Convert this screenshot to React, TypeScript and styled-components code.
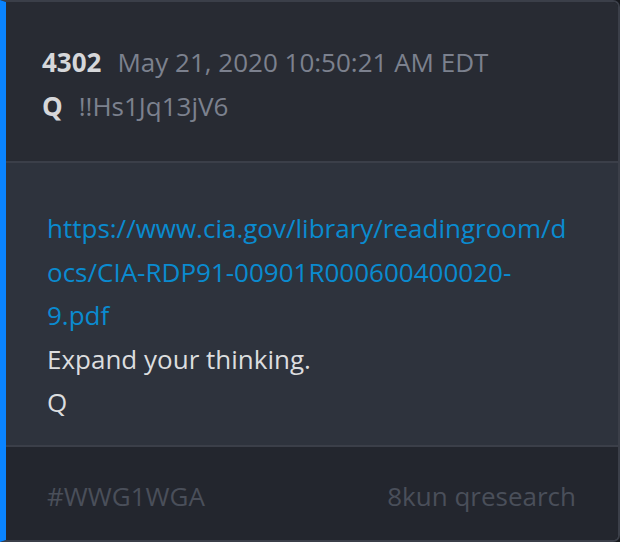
import React from "react";
import styled, { createGlobalStyle } from "styled-components";

const GlobalStyle = createGlobalStyle`
  html, body {
    margin: 0;
    padding: 0;
    background: #16181d;
  }
  * {
    box-sizing: border-box;
  }
`;

const Card = styled.article`
  width: 620px;
  height: 542px;
  display: flex;
  flex-direction: column;
  border: 2px solid #3b3f49;
  border-left: 6px solid #0a84ff;
  border-radius: 0 7px 7px 0;
  overflow: hidden;
  font-family: "Open Sans", "Noto Sans", sans-serif;
  font-size: 26px;
`;

const Header = styled.header`
  height: 161px;
  padding: 38px 36px 0;
  background: #282b33;
  border-bottom: 2px solid #3b3f49;
  display: flex;
  flex-direction: column;
`;

const MetaRow = styled.div`
  display: flex;
  align-items: baseline;
  gap: 16px;
  line-height: 44px;
`;

const Strong = styled.span`
  font-weight: 700;
  color: #d6d7da;
`;

const Muted = styled.span`
  color: #7c818e;
`;

const Body = styled.section`
  flex: 1;
  padding: 44px 48px 0 41px;
  background: #2e333d;
  border-bottom: 2px solid #3b3f49;
  line-height: 43.5px;
  color: #dcdddf;
`;

const Link = styled.a`
  display: block;
  color: #0a8bd0;
  text-decoration: none;
  overflow-wrap: anywhere;
`;

const Line = styled.div``;

const Footer = styled.footer`
  height: 93px;
  padding: 4px 42px 0 41px;
  background: #23262e;
  display: flex;
  align-items: center;
  justify-content: space-between;
  color: #4a4f5a;
`;

export default function App() {
  return (
    <>
      <GlobalStyle />
      <Card>
        <Header>
          <MetaRow>
            <Strong>4302</Strong>
            <Muted>May 21, 2020 10:50:21 AM EDT</Muted>
          </MetaRow>
          <MetaRow>
            <Strong>Q</Strong>
            <Muted>!!Hs1Jq13jV6</Muted>
          </MetaRow>
        </Header>
        <Body>
          <Link href="#">
            https://www.cia.gov/library/readingroom/docs/CIA-RDP91-00901R000600400020-9.pdf
          </Link>
          <Line>Expand your thinking.</Line>
          <Line>Q</Line>
        </Body>
        <Footer>
          <span>#WWG1WGA</span>
          <span>8kun qresearch</span>
        </Footer>
      </Card>
    </>
  );
}
